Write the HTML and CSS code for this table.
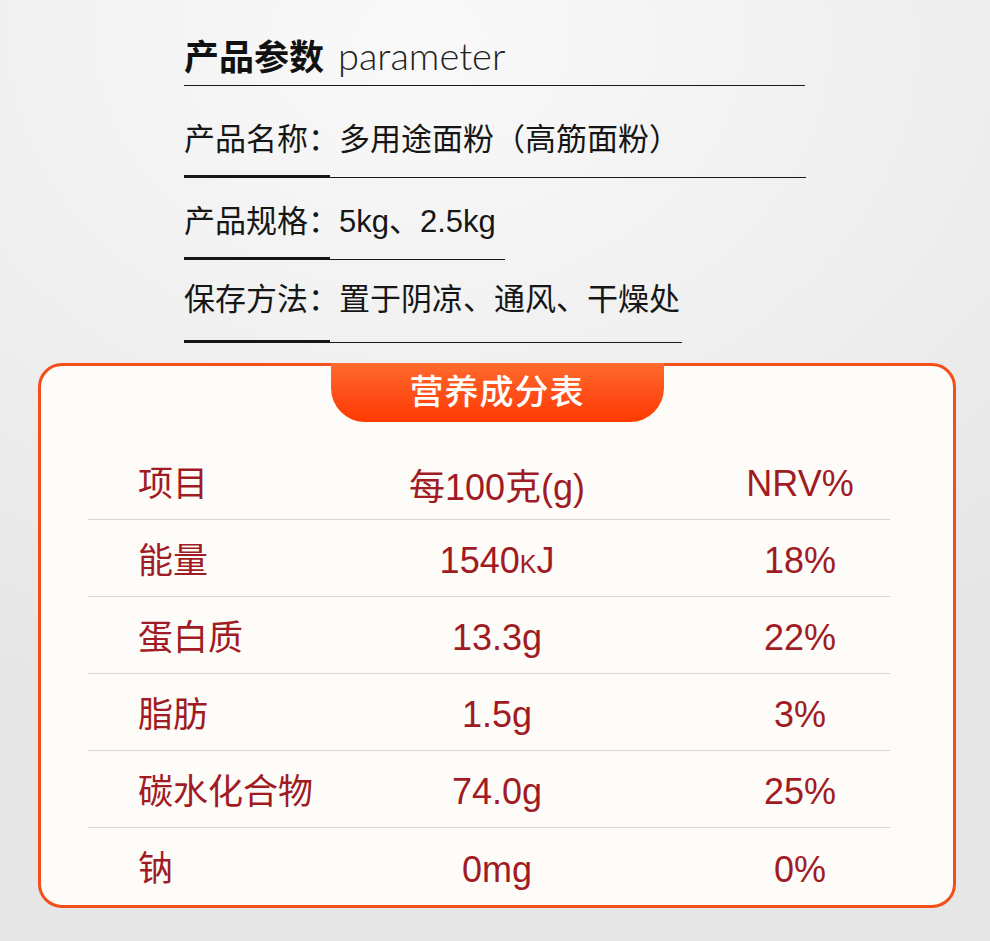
FILE: index.html
```html
<!DOCTYPE html>
<html lang="zh-CN">
<head>
<meta charset="utf-8">
<title>产品参数</title>
<link rel="stylesheet" href="styles.css">
</head>
<body>
<div class="page">
  <section class="params">
    <div class="title-row">
      <h1 class="title"><span class="title-cn">产品参数</span> <span class="title-en">parameter</span></h1>
      <div class="title-line"></div>
    </div>
    <div class="param param-1">
      <p class="param-text">产品名称：多用途面粉（高筋面粉）</p>
      <div class="rule rule-1"><span class="thick"></span><span class="thin"></span></div>
    </div>
    <div class="param param-2">
      <p class="param-text">产品规格：5kg、2.5kg</p>
      <div class="rule rule-2"><span class="thick"></span><span class="thin"></span></div>
    </div>
    <div class="param param-3">
      <p class="param-text">保存方法：置于阴凉、通风、干燥处</p>
      <div class="rule rule-3"><span class="thick"></span><span class="thin"></span></div>
    </div>
  </section>

  <section class="card">
    <div class="tab">营养成分表</div>
    <div class="table">
      <div class="row">
        <span class="c1">项目</span><span class="c2">每100克(g)</span><span class="c3">NRV%</span>
      </div>
      <div class="row">
        <span class="c1">能量</span><span class="c2">1540<span class="small-k">K</span>J</span><span class="c3">18%</span>
      </div>
      <div class="row">
        <span class="c1">蛋白质</span><span class="c2">13.3g</span><span class="c3">22%</span>
      </div>
      <div class="row">
        <span class="c1">脂肪</span><span class="c2">1.5g</span><span class="c3">3%</span>
      </div>
      <div class="row">
        <span class="c1">碳水化合物</span><span class="c2">74.0g</span><span class="c3">25%</span>
      </div>
      <div class="row row-last">
        <span class="c1">钠</span><span class="c2">0mg</span><span class="c3">0%</span>
      </div>
    </div>
  </section>
</div>
</body>
</html>
```
FILE: styles.css
```css
* { box-sizing: border-box; }
html, body { margin: 0; padding: 0; }
body {
  width: 990px;
  height: 941px;
  overflow: hidden;
  background: radial-gradient(ellipse 900px 700px at 420px 40px, #f9f9f9 0%, #efefef 55%, #e6e6e6 100%);
  font-family: "Liberation Sans", "Noto Sans CJK SC", sans-serif;
}
.page {
  padding-top: 35px;
}
.params {
  margin-left: 184px;
}
.title {
  margin: 0;
  height: 40px;
  line-height: 40px;
  font-weight: normal;
  display: flex;
  align-items: baseline;
  gap: 14px;
}
.title-cn {
  font-family: "Noto Sans CJK SC", sans-serif;
  font-weight: 700;
  font-size: 35px;
  color: #111;
}
.title-en {
  font-family: "Lato", "Liberation Sans", sans-serif;
  font-weight: 300;
  font-size: 38px;
  color: #222;
}
.title-line {
  margin-top: 10px;
  width: 621px;
  height: 1px;
  background: #1a1a1a;
}
.param-text {
  margin: 0;
  height: 40px;
  line-height: 40px;
  font-size: 31px;
  color: #161616;
}
.param-1 { padding-top: 34px; }
.param-2 { padding-top: 24px; }
.param-3 { padding-top: 20px; }
.rule {
  display: flex;
  align-items: center;
  height: 3px;
}
.param-1 .rule { margin-top: 15px; }
.param-2 .rule { margin-top: 15px; }
.param-3 .rule { margin-top: 20px; }
.rule .thick {
  width: 146px;
  height: 3px;
  background: #161616;
}
.rule .thin {
  flex: 1;
  height: 1px;
  background: #1a1a1a;
  margin-top: 1px;
}
.rule-1 { width: 622px; }
.rule-2 { width: 321px; }
.rule-3 { width: 498px; }

.card {
  margin: 20px 0 0 38px;
  width: 918px;
  height: 545px;
  border: 3px solid #f44f1b;
  border-radius: 24px;
  background: #fdfcf8;
  display: flex;
  flex-direction: column;
  align-items: center;
}
.tab {
  margin-top: -3px;
  width: 333px;
  height: 59px;
  border-radius: 0 0 34px 34px;
  background: linear-gradient(180deg, #ff6b2c 0%, #ff4d18 55%, #ff3a02 100%);
  color: #fff;
  font-family: "Noto Sans CJK SC", sans-serif;
  font-weight: 500;
  font-size: 34px;
  line-height: 54px;
  text-align: center;
  letter-spacing: 1px;
}
.table {
  align-self: flex-start;
  margin-left: 47px;
  margin-top: 21px;
  width: 802px;
}
.row {
  display: grid;
  grid-template-columns: 50px 200px 318px 1fr;
  height: 77px;
  align-items: center;
  padding-top: 6px;
  border-bottom: 1px solid #d9d6d1;
  color: #a01b24;
  font-size: 35px;
}
.row-last { border-bottom: none; }
.row .c1 {
  grid-column: 2;
  white-space: nowrap;
  font-family: "Noto Sans CJK SC", sans-serif;
  line-height: 1.2;
  margin-bottom: 7px;
}
.row .c2 { grid-column: 3; text-align: center; white-space: nowrap; font-size: 36px; }
.row .c3 { grid-column: 4; text-align: center; padding-left: 54px; white-space: nowrap; font-size: 36px; }
.small-k { font-size: 25px; }
```
